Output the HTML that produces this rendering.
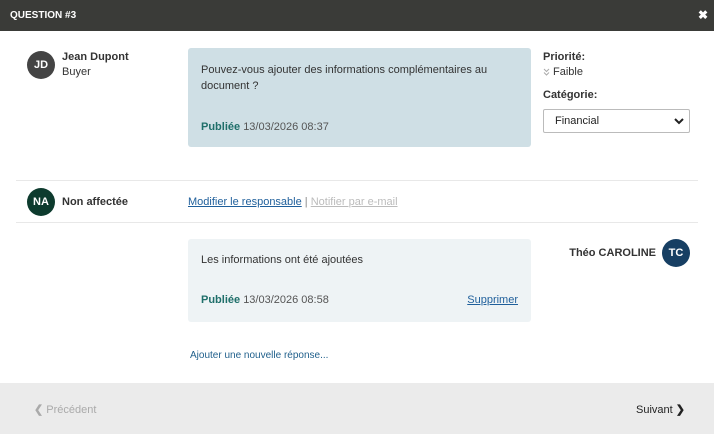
<!DOCTYPE html>
<html><head><meta charset="utf-8"><style>
*{margin:0;padding:0;box-sizing:border-box}
body{width:714px;height:434px;position:relative;background:#fff;font-family:"Liberation Sans",Arial,sans-serif;font-size:11px;color:#333;overflow:hidden}
.a{position:absolute;white-space:nowrap;line-height:14px}
.b{font-weight:bold}
.av{position:absolute;width:28px;height:28px;border-radius:50%;color:#fff;font-weight:bold;font-size:11px;text-align:center;line-height:28px}
.hr{position:absolute;left:16px;width:682px;height:1px;background:#e8e8e8}
.pub{color:#1f6f6a;font-weight:bold}
.dt{color:#555}
</style></head><body>
<div style="position:absolute;left:0;top:0;width:714px;height:31px;background:#3a3b38"></div>
<div class="a b" style="left:10px;top:9px;color:#fff;font-size:10px">QUESTION #3</div>
<div class="a b" style="left:698px;top:8px;color:#fff;font-size:12px">✖</div>

<div class="av" style="left:27px;top:51px;background:#444">JD</div>
<div class="a b" style="left:62px;top:50px">Jean Dupont</div>
<div class="a" style="left:62px;top:65px">Buyer</div>

<div style="position:absolute;left:188px;top:48px;width:343px;height:99px;background:#cfdfe5;border-radius:3px"></div>
<div class="a" style="left:201px;top:63px">Pouvez-vous ajouter des informations complémentaires au</div>
<div class="a" style="left:201px;top:79px">document ?</div>
<div class="a" style="left:201px;top:120px"><span class="pub">Publiée</span> <span class="dt">13/03/2026 08:37</span></div>

<div class="a b" style="left:543px;top:50px">Priorité:</div>
<svg style="position:absolute;left:543px;top:68px" width="7" height="8" viewBox="0 0 7 8"><path d="M1 1 L3.5 3.5 L6 1 M1 4.5 L3.5 7 L6 4.5" stroke="#aaa" stroke-width="1" fill="none"/></svg>
<div class="a" style="left:553px;top:65px">Faible</div>
<div class="a b" style="left:543px;top:88px">Catégorie:</div>
<div style="position:absolute;left:543px;top:109px;width:147px;height:24px;border:1px solid #bbb;border-radius:2px;background:#fff"></div>
<div class="a" style="left:555px;top:114px;color:#222">Financial</div>
<svg style="position:absolute;left:674px;top:117px" width="10" height="8" viewBox="0 0 10 8"><path d="M1 2 L5 6 L9 2" stroke="#222" stroke-width="2" fill="none"/></svg>

<div class="hr" style="top:180px"></div>
<div class="av" style="left:27px;top:188px;background:#0d3b2e">NA</div>
<div class="a b" style="left:62px;top:195px">Non affectée</div>
<div class="a" style="left:188px;top:195px"><span style="color:#1f5f9b;text-decoration:underline">Modifier le responsable</span> <span style="color:#888">|</span> <span style="color:#bbb;text-decoration:underline">Notifier par e-mail</span></div>
<div class="hr" style="top:222px"></div>

<div style="position:absolute;left:188px;top:239px;width:343px;height:83px;background:#eef3f5;border-radius:3px"></div>
<div class="a" style="left:201px;top:253px">Les informations ont été ajoutées</div>
<div class="a" style="left:201px;top:293px"><span class="pub">Publiée</span> <span class="dt">13/03/2026 08:58</span></div>
<div class="a" style="right:196px;top:293px;color:#1f5f9b;text-decoration:underline">Supprimer</div>

<div class="a b" style="right:58px;top:246px">Théo CAROLINE</div>
<div class="av" style="left:662px;top:239px;background:#173f63">TC</div>

<div class="a" style="left:190px;top:349px;color:#1f5f8b;font-size:10px">Ajouter une nouvelle réponse...</div>

<div style="position:absolute;left:0;top:383px;width:714px;height:51px;background:#ebebeb"></div>
<div class="a" style="left:34px;top:403px;color:#aaa"><b>❮</b> Précédent</div>
<div class="a" style="right:29px;top:403px;color:#222">Suivant <b>❯</b></div>
</body></html>
